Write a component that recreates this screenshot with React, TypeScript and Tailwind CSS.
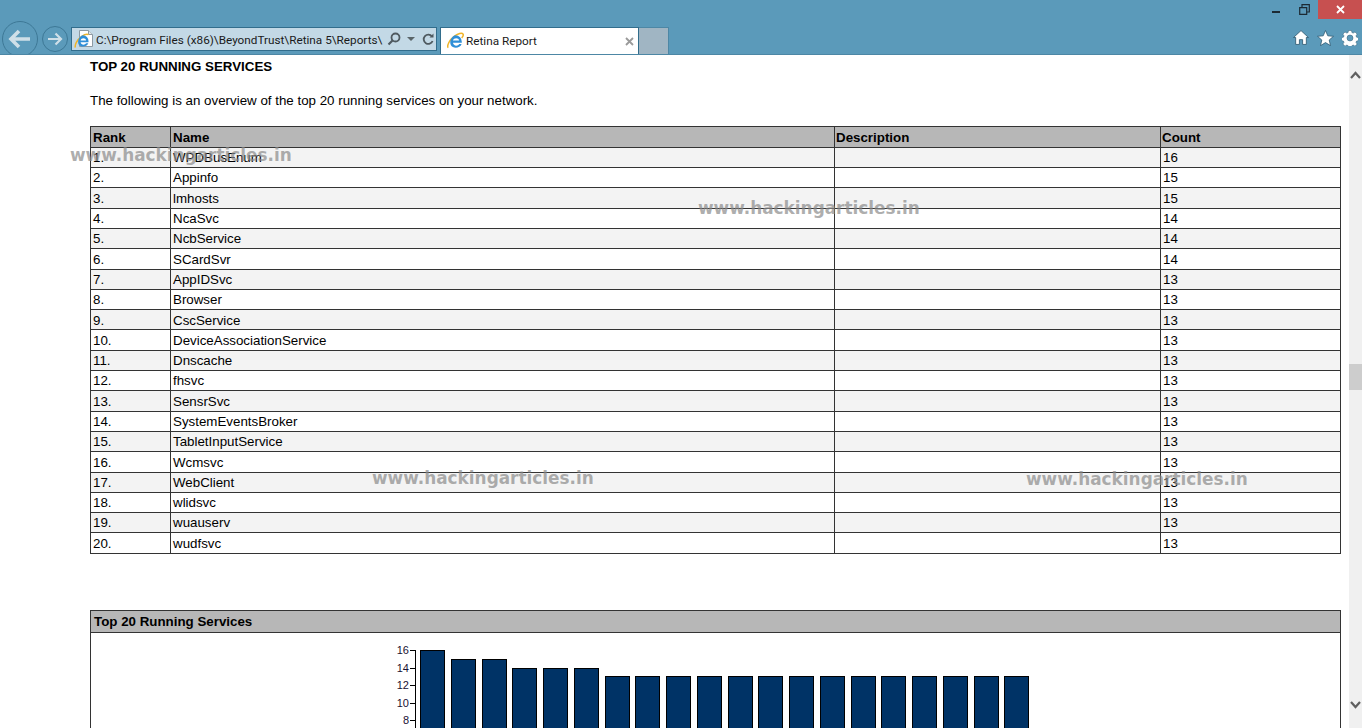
import React from 'react';

const services = [
  ['WPDBusEnum', 16],
  ['Appinfo', 15],
  ['lmhosts', 15],
  ['NcaSvc', 14],
  ['NcbService', 14],
  ['SCardSvr', 14],
  ['AppIDSvc', 13],
  ['Browser', 13],
  ['CscService', 13],
  ['DeviceAssociationService', 13],
  ['Dnscache', 13],
  ['fhsvc', 13],
  ['SensrSvc', 13],
  ['SystemEventsBroker', 13],
  ['TabletInputService', 13],
  ['Wcmsvc', 13],
  ['WebClient', 13],
  ['wlidsvc', 13],
  ['wuauserv', 13],
  ['wudfsvc', 13],
] as const;

const barX = [420, 451, 482, 512, 543, 574, 605, 635, 666, 697, 728, 758, 789, 820, 851, 881, 912, 943, 974, 1004];
const barTop: Record<number, number> = { 16: 17, 15: 26, 14: 35, 13: 43 };
const ticks = [
  [16, 17],
  [14, 35],
  [12, 52],
  [10, 70],
  [8, 87],
];

const watermarks = [
  'left-[70px] top-[145px]',
  'left-[698px] top-[198px]',
  'left-[372px] top-[468px]',
  'left-[1026px] top-[469px]',
];

const IeLogo = ({ size = 18 }: { size?: number }) => (
  <svg width={size} height={size} viewBox="0 0 18 18">
    <path d="M2.2 15.8C.6 14 3.5 7.5 8.5 4c3.6-2.500 7.500-3.500 8.500-2 .7 1-.3 2.800-1.300 4" fill="none" stroke="#f0b428" strokeWidth="1.500" />
    <path
      d="M9.500 3.200a6.300 6.300 0 0 1 6.300 6.600v1H7c.2 3.200 4.800 3.800 6.200 1.200h2.400c-1.600 4.600-8.800 5-10.800 1-1.500-3.800.3-8.600 4.700-9.800zM7 8.600h6.200C13 5.400 7.500 5.300 7 8.600z"
      fill="#2f8fd8"
    />
  </svg>
);

const PageIeLogo = () => (
  <svg width="19" height="19" viewBox="0 0 19 19">
    <path d="M5.500 .5h9l4 4v12h-13z" fill="#fff" stroke="#8d9aa3" />
    <path d="M14.500 .5v4h4" fill="#dfe6ea" stroke="#8d9aa3" />
    <path d="M1.500 17.500C.3 15.500 3 9.500 7.500 6.500c2.500-1.700 5.500-2.700 7-1.800" fill="none" stroke="#f0b428" strokeWidth="1.500" />
    <path
      d="M8.800 5.200a5.700 5.700 0 0 1 5.700 6v1H6.600c.2 2.800 4.200 3.300 5.500 1.100h2.200c-1.400 4-8 4.500-9.700.9-1.300-3.400.3-7.700 4.200-9zM6.600 10.400h5.500c-.2-2.900-5.100-3-5.500 0z"
      fill="#2f8fd8"
    />
  </svg>
);

const Scrollbar = () => (
  <div className="flex w-[13px] flex-col items-center bg-[#f0f0f0]">
    <svg className="mt-[16px]" width="11" height="8" viewBox="0 0 11 8">
      <path d="M1 7l4.500-5L10 7" fill="none" stroke="#5f5f5f" strokeWidth="2.200" />
    </svg>
    <div className="mt-[285px] h-[26px] w-full bg-[#cdcdcd]" />
    <svg className="mt-[311px]" width="11" height="8" viewBox="0 0 11 8">
      <path d="M1 1l4.500 5L10 1" fill="none" stroke="#5f5f5f" strokeWidth="2.200" />
    </svg>
  </div>
);

const BrowserChrome = () => (
  <header className="flex h-[55px] shrink-0 flex-col overflow-hidden border-b border-[#4d87a5] bg-[#5b9aba]">
    <div className="flex h-[19px] shrink-0 items-start justify-end">
      <div className="mt-[11px] mr-[19px] h-[2px] w-[8px] bg-[#1c2a33]" />
      <svg className="mt-[4px] mr-[8px]" width="11" height="11" viewBox="0 0 11 11">
        <path d="M.7 3.700h7v6.600h-7zM3 3.500V.7h7.300V8H8" fill="none" stroke="#1c2a33" strokeWidth="1.200" />
      </svg>
      <div className="flex h-[19px] w-[44px] items-center justify-center bg-[#c75050]">
        <svg width="9" height="9" viewBox="0 0 9 9">
          <path d="M1 1l7 7M8 1L1 8" stroke="#fff" strokeWidth="1.800" />
        </svg>
      </div>
    </div>
    <div className="flex min-h-0 flex-1 items-stretch pl-[2px]">
      <div className="flex h-[39px] items-center">
        <div className="flex h-[36px] w-[36px] shrink-0 items-center justify-center rounded-full border border-[#3d7896]">
          <svg width="24" height="20" viewBox="0 0 24 20">
            <path d="M11 2l-8 8 8 8M3 10h19" fill="none" stroke="#cfdfe8" strokeWidth="3.600" />
          </svg>
        </div>
        <div className="ml-[4px] flex h-[26px] w-[26px] shrink-0 items-center justify-center rounded-full border border-[#3d7896]">
          <svg width="16" height="14" viewBox="0 0 16 14">
            <path d="M8.500 1.500l5.500 5.500-5.500 5.500M13.500 7H1" fill="none" stroke="#cfdfe8" strokeWidth="2.200" />
          </svg>
        </div>
      </div>
      <div className="mt-[8px] ml-[3px] flex h-[24px] w-[366px] items-center border border-[#326d8c] bg-[#c3d9e6] pl-[2px]">
        <PageIeLogo />
        <span className="ml-[3px] pt-[3px] font-['Roboto',sans-serif] text-[11.75px] whitespace-nowrap text-[#1a1a1a]">
          C:\Program Files (x86)\BeyondTrust\Retina 5\Reports\
        </span>
        <svg className="ml-[5px]" width="14" height="14" viewBox="0 0 14 14">
          <circle cx="8.500" cy="5.500" r="4" fill="none" stroke="#4f5a60" strokeWidth="1.800" />
          <path d="M5.500 8.500L1.500 12.500" stroke="#4f5a60" strokeWidth="2.200" />
        </svg>
        <svg className="ml-[6px]" width="8" height="4" viewBox="0 0 8 4">
          <path d="M0 0h8L4 4z" fill="#5a6569" />
        </svg>
        <svg className="ml-[7px]" width="12" height="13" viewBox="0 0 12 13">
          <path d="M10 3.500A4.600 4.600 0 1 0 10.600 8" fill="none" stroke="#4f5a60" strokeWidth="1.800" />
          <path d="M7.500 4.500H11.500V.5z" fill="#4f5a60" />
        </svg>
      </div>
      <div className="mt-[8px] ml-[3px] flex h-[27px] w-[199px] items-center border-r border-l border-t border-[#326d8c] bg-white pl-[5px] pr-[4px]">
        <IeLogo />
        <span className="ml-[2px] flex-1 pt-[1px] font-['Roboto',sans-serif] text-[11.75px] text-[#1a1a1a]">Retina Report</span>
        <svg width="9" height="9" viewBox="0 0 9 9">
          <path d="M1 1l7 7M8 1L1 8" stroke="#9a9a9a" strokeWidth="1.800" />
        </svg>
      </div>
      <div className="mt-[8px] h-[27px] w-[30px] border-r border-t border-[#4d87a5] bg-[#a0b5c3]" />
      <div className="flex flex-1 items-start justify-end gap-[8px] pt-[11px] pr-[4px]">
        <svg width="16" height="15" viewBox="0.5 0.5 15 14">
          <path d="M8 1L1 7.500h2V14h3.500V9.500h3V14H13V7.500h2z" fill="#fff" stroke="#2f5a72" strokeWidth=".8" />
        </svg>
        <svg width="17" height="16" viewBox="0 0 17 16">
          <path d="M8.500 .5l2.300 5.300 5.700.5-4.300 3.700 1.300 5.600-5-3-5 3 1.300-5.600L.5 6.300l5.700-.5z" fill="#fff" stroke="#2f5a72" strokeWidth=".8" />
        </svg>
        <svg width="16" height="16" viewBox="0 0 16 16">
          <path
            fillRule="evenodd"
            d="M6.500 .5h3l.4 2 1.300.6 1.800-1.100 2.100 2.100-1.100 1.800.6 1.300 2 .4v3l-2 .4-.6 1.300 1.100 1.800-2.100 2.100-1.800-1.100-1.300.6-.4 2h-3l-.4-2-1.300-.6-1.800 1.100-2.100-2.100 1.100-1.800-.6-1.300-2-.4v-3l2-.4.6-1.300-1.100-1.800 2.100-2.100 1.800 1.100 1.300-.6zM8 5a3 3 0 1 0 0 6 3 3 0 0 0 0-6z"
            fill="#fff"
            stroke="#2f5a72"
            strokeWidth=".5"
          />
        </svg>
      </div>
    </div>
  </header>
);

const ServicesChart = () => (
  <svg width="1249" height="96" viewBox="0 0 1249 96" className="block">
    <g transform="translate(-91 0)">
      <path d="M415.500 17V96" stroke="#000" />
      {ticks.map(([label, y]) => (
        <g key={label}>
          <path d={`M410 ${y + 0.5}h5`} stroke="#000" />
          <text x="409" y={y + 4} textAnchor="end" fontSize="11" fontFamily="Liberation Sans, sans-serif" fill="#1a1033">
            {label}
          </text>
        </g>
      ))}
      {services.map(([name, count], i) => (
        <rect key={name} x={barX[i] + 0.5} y={barTop[count] + 0.5} width="24" height="120" fill="#003366" stroke="#000" />
      ))}
    </g>
  </svg>
);

export default function App() {
  return (
    <div className="relative flex h-[728px] w-[1362px] flex-col overflow-hidden bg-white font-['Liberation_Sans',Arial,sans-serif] text-[13.33px] text-black">
      <BrowserChrome />
      <div className="flex min-h-0 flex-1">
        <main className="min-w-0 flex-1 pl-[90px] pr-[8px]">
          <h2 className="mt-[4px] h-[16px] text-[13.33px] leading-[16px] font-bold">TOP 20 RUNNING SERVICES</h2>
          <p className="mt-[18px] h-[16px] leading-[16px]">The following is an overview of the top 20 running services on your network.</p>
          <table className="mt-[17px] w-[1251px] table-fixed border-collapse">
            <colgroup>
              <col className="w-[80px]" />
              <col className="w-[664px]" />
              <col className="w-[326px]" />
              <col />
            </colgroup>
            <thead>
              <tr className="h-[20.8px] bg-[#b7b7b7] text-left">
                <th className="border border-[#333] px-[2px] pt-[2px] pb-0 leading-[16px] font-bold">Rank</th>
                <th className="border border-[#333] px-[2px] pt-[2px] pb-0 leading-[16px] font-bold">Name</th>
                <th className="border border-[#333] pr-[2px] pl-[1px] pt-[2px] pb-0 leading-[16px] font-bold">Description</th>
                <th className="border border-[#333] pr-[2px] pl-[1px] pt-[2px] pb-0 leading-[16px] font-bold">Count</th>
              </tr>
            </thead>
            <tbody>
              {services.map(([name, count], i) => (
                <tr key={name} className={`h-[20.31px] ${i % 2 === 0 ? 'bg-[#f3f3f3]' : 'bg-white'}`}>
                  <td className="border border-[#333] px-[2px] pt-[1.4px] pb-0 leading-[16px]">{i + 1}.</td>
                  <td className="border border-[#333] px-[2px] pt-[1.4px] pb-0 leading-[16px]">{name}</td>
                  <td className="border border-[#333] px-[2px] pt-[1.4px] pb-0 leading-[16px]" />
                  <td className="border border-[#333] px-[2px] pt-[1.4px] pb-0 leading-[16px]">{count}</td>
                </tr>
              ))}
            </tbody>
          </table>
          <section className="mt-[56px] w-[1251px] border border-[#333]">
            <div className="h-[22px] border-b border-[#333] bg-[#b7b7b7] pl-[3px] pt-[3px] leading-[16px] font-bold">Top 20 Running Services</div>
            <ServicesChart />
          </section>
        </main>
        <Scrollbar />
      </div>
      {watermarks.map((pos) => (
        <div
          key={pos}
          className={`absolute ${pos} font-['DejaVu_Sans',sans-serif] text-[16.9px] leading-[20px] font-bold whitespace-nowrap text-[#8a8a8a]/70`}
        >
          www.hackingarticles.in
        </div>
      ))}
    </div>
  );
}
